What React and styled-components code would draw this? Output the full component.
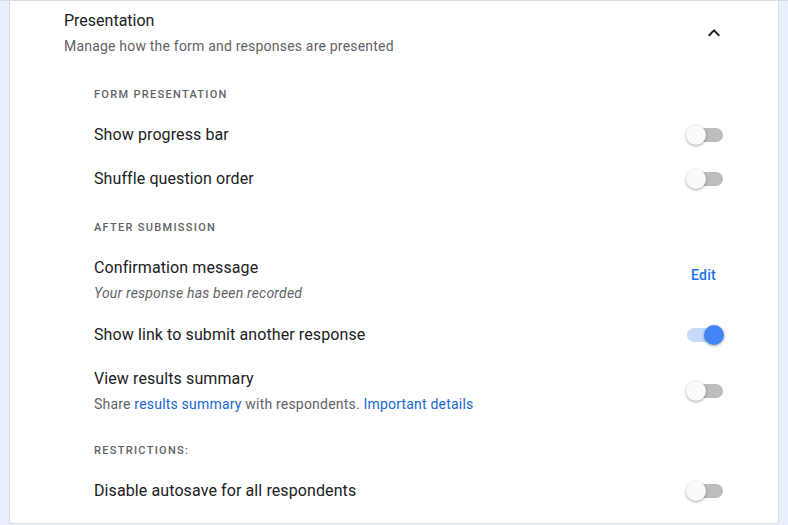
import styled, { createGlobalStyle } from "styled-components"

const GlobalStyle = createGlobalStyle`
  html, body {
    margin: 0;
    padding: 0;
    background: #e8f0fe;
    font-family: Roboto, "Liberation Sans", sans-serif;
  }
`

const Page = styled.div`
  width: 788px;
  height: 525px;
  box-sizing: border-box;
  padding: 0 9px;
  background: #e8f0fe;
  border-top: 1px solid #dadce0;
  overflow: hidden;
`

const Card = styled.div`
  background: #fff;
  border: 1px solid #dadce0;
  border-top: none;
  box-sizing: border-box;
  height: 523px;
  padding: 8px 54px 0 54px;
`

const Header = styled.div`
  display: flex;
  align-items: center;
  justify-content: space-between;
  margin-bottom: 12px;
`

const Title = styled.div`
  font-size: 16px;
  line-height: 24px;
  color: #202124;
`

const Subtitle = styled.div`
  font-size: 14px;
  line-height: 20px;
  letter-spacing: 0.2px;
  color: #5f6368;
  margin-top: 3px;
`

const ChevronBox = styled.div`
  width: 24px;
  height: 24px;
  margin-right: -2px;
  display: flex;
  align-items: center;
  justify-content: center;
`

const Section = styled.div`
  display: flex;
  flex-direction: column;
  padding-left: 30px;
`

const Label = styled.div`
  font-size: 11px;
  line-height: 16px;
  font-weight: 500;
  letter-spacing: 1.3px;
  color: #5f6368;
  margin: 19px 0 10px;
`

const Row = styled.div`
  display: flex;
  align-items: center;
  justify-content: space-between;
  padding: 10px 0;
`

const RowText = styled.div`
  display: flex;
  flex-direction: column;
`

const RowTitle = styled.div`
  font-size: 16px;
  line-height: 24px;
  letter-spacing: 0.1px;
  color: #202124;
`

const RowNote = styled.div`
  font-size: 14px;
  line-height: 20px;
  letter-spacing: 0.2px;
  margin-top: 3px;
  color: #5f6368;
  font-style: ${(p) => (p.$italic ? "italic" : "normal")};
`

const Link = styled.a`
  color: #1967d2;
  text-decoration: none;
`

const EditButton = styled.button`
  align-self: flex-start;
  margin-top: 9px;
  border: none;
  background: none;
  padding: 0 8px;
  font-family: inherit;
  font-size: 14px;
  line-height: 20px;
  font-weight: 500;
  color: #1a73e8;
  letter-spacing: 0.25px;
`

const Toggle = styled.div`
  position: relative;
  width: 38px;
  height: 20px;
  flex-shrink: 0;
`

const Track = styled.div`
  position: absolute;
  left: 1px;
  top: 3px;
  width: 36px;
  height: 14px;
  border-radius: 7px;
  background: ${(p) => (p.$on ? "#c6dafc" : "#bdbdbd")};
`

const Thumb = styled.div`
  position: absolute;
  top: 0;
  left: ${(p) => (p.$on ? "18px" : "0")};
  width: 20px;
  height: 20px;
  border-radius: 50%;
  background: ${(p) => (p.$on ? "#4285f4" : "#fafafa")};
  box-shadow: 0 1px 3px rgba(0, 0, 0, 0.35);
`

const Switch = ({ on }) => (
  <Toggle>
    <Track $on={on} />
    <Thumb $on={on} />
  </Toggle>
)

const App = () => {
  return (
    <>
      <GlobalStyle />
      <Page>
        <Card>
          <Header>
            <div>
              <Title>Presentation</Title>
              <Subtitle>Manage how the form and responses are presented</Subtitle>
            </div>
            <ChevronBox>
              <svg width="24" height="24" viewBox="0 0 24 24">
                <path d="M7.41 15.41 12 10.83l4.59 4.58L18 14l-6-6-6 6z" fill="#202124" />
              </svg>
            </ChevronBox>
          </Header>

          <Section>
            <Label>FORM PRESENTATION</Label>
            <Row>
              <RowTitle>Show progress bar</RowTitle>
              <Switch />
            </Row>
            <Row>
              <RowTitle>Shuffle question order</RowTitle>
              <Switch />
            </Row>

            <Label>AFTER SUBMISSION</Label>
            <Row>
              <RowText>
                <RowTitle>Confirmation message</RowTitle>
                <RowNote $italic>Your response has been recorded</RowNote>
              </RowText>
              <EditButton>Edit</EditButton>
            </Row>
            <Row>
              <RowTitle>Show link to submit another response</RowTitle>
              <Switch on />
            </Row>
            <Row>
              <RowText>
                <RowTitle>View results summary</RowTitle>
                <RowNote>
                  Share <Link>results summary</Link> with respondents.{" "}
                  <Link>Important details</Link>
                </RowNote>
              </RowText>
              <Switch />
            </Row>

            <Label>RESTRICTIONS:</Label>
            <Row>
              <RowTitle>Disable autosave for all respondents</RowTitle>
              <Switch />
            </Row>
          </Section>
        </Card>
      </Page>
    </>
  )
}

export default App
